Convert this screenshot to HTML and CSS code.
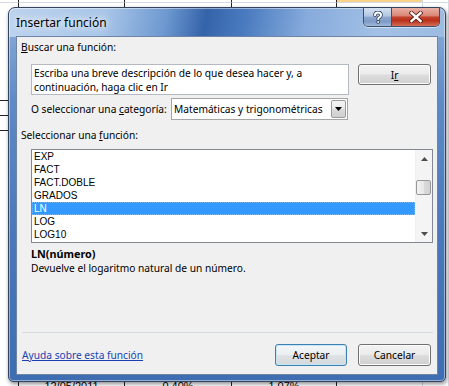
FILE: index.html
```html
<!DOCTYPE html>
<html lang="es">
<head>
<meta charset="utf-8">
<title>Insertar función</title>
<link rel="stylesheet" href="styles.css">
</head>
<body>
<div class="sheet">
  <div class="srow srow-top"><div class="c c0"></div><div class="c c1"></div><div class="c c2"></div><div class="c c3"></div><div class="c c4 csel"></div><div class="c c5"></div></div>
  <div class="srow srow-gap"><div class="c c0"></div><div class="c c1"></div><div class="c c2"></div><div class="c c3"></div><div class="c c4"></div><div class="c c5"></div></div>
  <div class="srow"><div class="c c0"></div><div class="c c1"></div><div class="c c2"></div><div class="c c3"></div><div class="c c4"></div><div class="c c5"></div></div>
  <div class="srow"><div class="c c0"></div><div class="c c1"></div><div class="c c2"></div><div class="c c3"></div><div class="c c4"></div><div class="c c5"></div></div>
  <div class="srow"><div class="c c0"></div><div class="c c1"></div><div class="c c2"></div><div class="c c3"></div><div class="c c4"></div><div class="c c5"></div></div>
  <div class="srow"><div class="c c0"></div><div class="c c1"></div><div class="c c2"></div><div class="c c3"></div><div class="c c4"></div><div class="c c5"></div></div>
  <div class="srow"><div class="c c0"></div><div class="c c1"></div><div class="c c2"></div><div class="c c3"></div><div class="c c4"></div><div class="c c5"></div></div>
  <div class="srow srow-ruled"><div class="c c0"></div><div class="c c1"></div><div class="c c2"></div><div class="c c3"></div><div class="c c4"></div><div class="c c5"></div></div>
  <div class="srow srow-ruled"><div class="c c0"></div><div class="c c1"></div><div class="c c2"></div><div class="c c3"></div><div class="c c4"></div><div class="c c5"></div></div>
  <div class="srow srow-ruled"><div class="c c0"></div><div class="c c1"></div><div class="c c2"></div><div class="c c3"></div><div class="c c4"></div><div class="c c5"></div></div>
  <div class="srow"><div class="c c0"></div><div class="c c1"></div><div class="c c2"></div><div class="c c3"></div><div class="c c4"></div><div class="c c5"></div></div>
  <div class="srow"><div class="c c0"></div><div class="c c1"></div><div class="c c2"></div><div class="c c3"></div><div class="c c4"></div><div class="c c5"></div></div>
  <div class="srow"><div class="c c0"></div><div class="c c1"></div><div class="c c2"></div><div class="c c3"></div><div class="c c4"></div><div class="c c5"></div></div>
  <div class="srow"><div class="c c0"></div><div class="c c1"></div><div class="c c2"></div><div class="c c3"></div><div class="c c4"></div><div class="c c5"></div></div>
  <div class="srow"><div class="c c0"></div><div class="c c1"></div><div class="c c2"></div><div class="c c3"></div><div class="c c4"></div><div class="c c5"></div></div>
  <div class="srow"><div class="c c0"></div><div class="c c1"></div><div class="c c2"></div><div class="c c3"></div><div class="c c4"></div><div class="c c5"></div></div>
  <div class="srow"><div class="c c0"></div><div class="c c1"></div><div class="c c2"></div><div class="c c3"></div><div class="c c4"></div><div class="c c5"></div></div>
  <div class="srow"><div class="c c0"></div><div class="c c1"></div><div class="c c2"></div><div class="c c3"></div><div class="c c4"></div><div class="c c5"></div></div>
  <div class="srow"><div class="c c0"></div><div class="c c1"></div><div class="c c2"></div><div class="c c3"></div><div class="c c4"></div><div class="c c5"></div></div>
  <div class="srow"><div class="c c0"></div><div class="c c1"></div><div class="c c2"></div><div class="c c3"></div><div class="c c4"></div><div class="c c5"></div></div>
  <div class="srow"><div class="c c0"></div><div class="c c1"></div><div class="c c2"></div><div class="c c3"></div><div class="c c4"></div><div class="c c5"></div></div>
  <div class="srow"><div class="c c0"></div><div class="c c1"></div><div class="c c2"></div><div class="c c3"></div><div class="c c4"></div><div class="c c5"></div></div>
  <div class="srow"><div class="c c0"></div><div class="c c1"></div><div class="c c2"></div><div class="c c3"></div><div class="c c4"></div><div class="c c5"></div></div>
  <div class="srow"><div class="c c0"></div><div class="c c1"></div><div class="c c2"></div><div class="c c3"></div><div class="c c4"></div><div class="c c5"></div></div>
  <div class="srow"><div class="c c0"></div><div class="c c1"></div><div class="c c2"></div><div class="c c3"></div><div class="c c4"></div><div class="c c5"></div></div>
  <div class="srow"><div class="c c0"></div><div class="c c1"></div><div class="c c2"></div><div class="c c3"></div><div class="c c4"></div><div class="c c5"></div></div>
  <div class="srow srow-data"><div class="c c0"></div><div class="c c1">12/05/2011</div><div class="c c2">0,40%</div><div class="c c3">1,07%</div><div class="c c4"></div><div class="c c5"></div></div>
</div>

<div class="dialog">
  <div class="titlebar">
    <span class="title">Insertar función</span>
    <div class="caption-btns">
      <div class="cap cap-help">
        <svg width="12" height="13" viewBox="0 0 12 13"><path d="M3 4.2 Q3 1.5 6 1.5 Q9 1.5 9 4 Q9 5.6 7 6.6 Q6.2 7.1 6.2 8.3" fill="none" stroke="#2b3d57" stroke-width="3.6" stroke-linecap="round"/><path d="M3 4.2 Q3 1.5 6 1.5 Q9 1.5 9 4 Q9 5.6 7 6.6 Q6.2 7.1 6.2 8.3" fill="none" stroke="#fff" stroke-width="2" stroke-linecap="round"/><circle cx="6.2" cy="11" r="1.8" fill="#2b3d57"/><circle cx="6.2" cy="11" r="1" fill="#fff"/></svg>
      </div>
      <div class="cap cap-close">
        <svg width="14" height="12" viewBox="0 0 14 12"><path d="M2.5 2 L11.5 10 M11.5 2 L2.5 10" stroke="#5a1c14" stroke-width="4.2" stroke-linecap="square"/><path d="M2.5 2 L11.5 10 M11.5 2 L2.5 10" stroke="#fff" stroke-width="2.4" stroke-linecap="square"/></svg>
      </div>
    </div>
  </div>

  <div class="client">
    <div class="label"><u>B</u>uscar una función:</div>
    <div class="search-row">
      <div class="searchbox">Escriba una breve descripción de lo que desea hacer y, a continuación, haga clic en Ir</div>
      <div class="btn btn-ir">I<u>r</u></div>
    </div>
    <div class="cat-row">
      <span class="cat-label">O seleccionar una <u>c</u>ategoría:</span>
      <div class="combo">
        <span class="combo-text">Matemáticas y trigonométricas</span>
        <span class="combo-btn"><svg width="7" height="4" viewBox="0 0 7 4"><path d="M0 0 H7 L3.5 4 Z" fill="#000"/></svg></span>
      </div>
    </div>
    <div class="label label-list">Seleccionar una <u>f</u>unción:</div>
    <div class="listbox">
      <div class="items">
        <div class="item">EXP</div>
        <div class="item">FACT</div>
        <div class="item">FACT.DOBLE</div>
        <div class="item">GRADOS</div>
        <div class="item item-sel">LN</div>
        <div class="item">LOG</div>
        <div class="item">LOG10</div>
      </div>
      <div class="vscroll">
        <div class="sarrow"><svg width="7" height="4" viewBox="0 0 7 4"><path d="M0 4 H7 L3.5 0 Z" fill="#4d4d4d"/></svg></div>
        <div class="strack"><div class="sthumb"></div></div>
        <div class="sarrow"><svg width="7" height="4" viewBox="0 0 7 4"><path d="M0 0 H7 L3.5 4 Z" fill="#4d4d4d"/></svg></div>
      </div>
    </div>
    <div class="syntax">LN(número)</div>
    <div class="desc">Devuelve el logaritmo natural de un número.</div>
    <div class="spacer"></div>
    <div class="separator"></div>
    <div class="footer">
      <a class="help-link" href="#">Ayuda sobre esta función</a>
      <div class="footer-btns">
        <div class="btn btn-default">Aceptar</div>
        <div class="btn">Cancelar</div>
      </div>
    </div>
  </div>
</div>
</body>
</html>
```

FILE: styles.css
```css
* { box-sizing: border-box; }

html, body {
  margin: 0;
  padding: 0;
  width: 449px;
  height: 386px;
  overflow: hidden;
  background: #ffffff;
}

body {
  font-family: "Noto Sans", "Liberation Sans", sans-serif;
  font-size: 10.2px;
  color: #000;
  position: relative;
}

/* ---------- background spreadsheet ---------- */
.sheet {
  display: flex;
  flex-direction: column;
}
.srow {
  display: flex;
  height: 15px;
  flex: none;
}
.srow-top { height: 3px; }
.srow-gap { height: 8px; }
.c {
  flex: none;
  height: 100%;
  border-right: 1px solid #d4d9e2;
}
.srow-top .c { border-bottom: 1px solid #d4d9e2; }
.c0 { width: 19px; border-right-color: #222; }
.c1 { width: 106px; border-right-color: #222; }
.c2 { width: 107px; border-right-color: #222; }
.c3 { width: 105px; border-right-color: #222; }
.c4 { width: 86px; }
.c5 { width: 26px; }
.csel { background: #f9d38b; }
.srow-ruled .c0 { border-bottom: 1px solid #222; }
.srow-data { height: 20px; }
.srow-data .c {
  font-family: "Liberation Sans", sans-serif;
  font-size: 11px;
  line-height: 13px;
  text-align: center;
  padding-top: 9px;
  color: #000;
}

/* ---------- dialog window ---------- */
.dialog {
  position: absolute;
  left: 8px;
  top: 7px;
  width: 438px;
  height: 375px;
  border: 1px solid #33445e;
  border-radius: 7px 7px 5px 5px;
  padding: 0 7px 6px 7px;
  display: flex;
  flex-direction: column;
  background:
    linear-gradient(100deg, #bcd3ee 0%, #a9c6e8 22%, #6d98d0 36%, #3563a9 45%, #4a7bbf 54%, #87abdc 68%, #a3c1e6 85%, #9cbbe2 100%) top left / 100% 29px no-repeat,
    linear-gradient(180deg, #8fb0da 0%, #5e8ac6 25%, #4a78ba 60%, #3e6db2 100%);
  box-shadow: 1px 2px 4px rgba(0, 0, 0, 0.45), inset 0 0 0 1px rgba(255, 255, 255, 0.45);
}

.titlebar {
  height: 28px;
  flex: none;
  display: flex;
  align-items: center;
  margin-right: -2px;
}
.title {
  font-size: 12px;
  color: #000;
  text-shadow: 0 0 6px #ffffff, 0 0 10px #ffffff;
  padding-top: 1px;
}
.caption-btns {
  display: flex;
  align-self: flex-start;
  margin-left: auto;
  height: 19px;
  border: 1px solid #3e4f69;
  border-top: none;
  border-radius: 0 0 5px 5px;
  overflow: hidden;
  box-shadow: 0 1px 0 rgba(255, 255, 255, 0.5);
}
.cap {
  display: flex;
  align-items: center;
  justify-content: center;
  height: 100%;
}
.cap-help {
  width: 28px;
  border-right: 1px solid #3e4f69;
  background: linear-gradient(180deg, #d6e2f1 0%, #b3c7e2 45%, #8ea8cf 50%, #7e9bc6 75%, #9fb8dc 100%);
}
.cap-close {
  width: 47px;
  background: linear-gradient(180deg, #e9b1a6 0%, #d98776 42%, #c2402a 52%, #b8321c 70%, #d66d55 100%);
}

.client {
  flex: 1;
  display: flex;
  flex-direction: column;
  background: #f0f0f0;
  border: 1px solid #6f84a2;
  padding: 3px 4px 8px 4px;
}

.label {
  line-height: 15px;
  height: 15px;
}
.search-row {
  display: flex;
  gap: 9px;
  margin-top: 9px;
  padding-left: 10px;
  align-items: flex-start;
}
.searchbox {
  width: 318px;
  height: 31px;
  background: #fff;
  border: 1px solid #b4b9c2;
  padding: 1px 3px 0 2px;
  line-height: 14px;
}

.btn {
  display: flex;
  align-items: center;
  justify-content: center;
  height: 22px;
  width: 73px;
  border: 1px solid #707070;
  border-radius: 3px;
  background: linear-gradient(180deg, #f3f3f3 0%, #ebebeb 48%, #dddddd 52%, #cfcfcf 100%);
  box-shadow: inset 0 0 0 1px #fcfcfc;
  color: #000;
}
.btn-ir { height: 21px; }
.btn-default {
  width: 72px;
  border-color: #3c7fb1;
  background: linear-gradient(180deg, #f4f7f9 0%, #eceff1 48%, #dfe3e6 52%, #d3d8db 100%);
  box-shadow: inset 0 0 0 1px #c6e6f8;
}

.cat-row {
  display: flex;
  align-items: center;
  margin-top: 3px;
  padding-left: 10px;
}
.cat-label {
  width: 140px;
  flex: none;
}
.combo {
  width: 177px;
  height: 22px;
  display: flex;
  align-items: center;
  background: #fff;
  border: 1px solid #a5a5a5;
  padding: 0 1px 0 2px;
}
.combo-text { flex: 1; }
.combo-btn {
  width: 15px;
  height: 18px;
  display: flex;
  align-items: center;
  justify-content: center;
  border: 1px solid #9c9c9c;
  border-radius: 2px;
  background: linear-gradient(180deg, #f4f4f4 0%, #e9e9e9 50%, #dbdbdb 51%, #cfcfcf 100%);
}

.label-list { margin-top: 8px; }

.listbox {
  margin-top: 6px;
  margin-left: 10px;
  width: 402px;
  height: 94px;
  border: 1px solid #828790;
  background: #fff;
  display: flex;
}
.items {
  flex: 1;
  font-family: "Liberation Sans", sans-serif;
  font-size: 10px;
}
.item {
  height: 13px;
  line-height: 13px;
  padding-left: 2px;
}
.item-sel {
  background: #3399ff;
  color: #fff;
  outline: 1px dotted #7ab8f2;
  outline-offset: -1px;
}
.vscroll {
  width: 17px;
  flex: none;
  display: flex;
  flex-direction: column;
  background: #f4f4f4;
  border-left: 1px solid #f0f0f0;
}
.sarrow {
  height: 17px;
  display: flex;
  align-items: center;
  justify-content: center;
}
.strack { flex: 1; }
.sthumb {
  margin-top: 13px;
  width: 15px;
  height: 15px;
  border: 1px solid #979797;
  border-radius: 2px;
  background: linear-gradient(90deg, #f3f3f3 0%, #e8e8e8 50%, #d9d9d9 51%, #d2d2d2 100%);
}

.syntax {
  margin-top: 3px;
  padding-left: 10px;
  font-weight: bold;
  font-size: 10.8px;
  line-height: 15px;
}
.desc {
  padding-left: 10px;
  line-height: 15px;
}
.spacer { flex: 1; }
.separator {
  height: 1px;
  margin-left: 1px;
  background: #d5dbe1;
  flex: none;
}
.footer {
  display: flex;
  align-items: center;
  margin-top: 11px;
  padding-left: 1px;
  padding-right: 2px;
}
.help-link {
  color: #1a3fb0;
  text-decoration: underline;
}
.footer-btns {
  display: flex;
  gap: 11px;
  margin-left: auto;
}
```
